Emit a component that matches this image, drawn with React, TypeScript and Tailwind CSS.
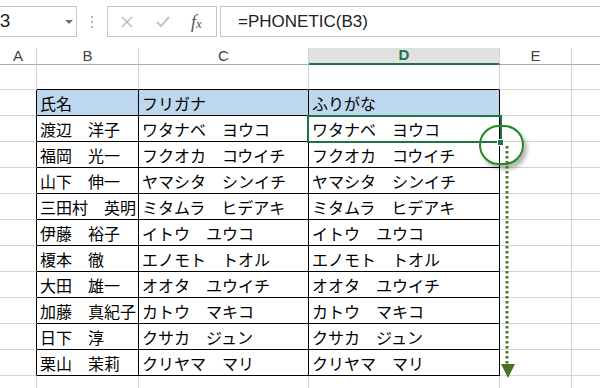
import React from 'react';

const cols = [37, 102, 170, 191, 72, 60];
const letters = ['A', 'B', 'C', 'D', 'E', ''];

const header = ['氏名', 'フリガナ', 'ふりがな'];
const people: [string, string][] = [
  ['渡辺　洋子', 'ワタナベ　ヨウコ'],
  ['福岡　光一', 'フクオカ　コウイチ'],
  ['山下　伸一', 'ヤマシタ　シンイチ'],
  ['三田村　英明', 'ミタムラ　ヒデアキ'],
  ['伊藤　裕子', 'イトウ　ユウコ'],
  ['榎本　徹', 'エノモト　トオル'],
  ['大田　雄一', 'オオタ　ユウイチ'],
  ['加藤　真紀子', 'カトウ　マキコ'],
  ['日下　淳', 'クサカ　ジュン'],
  ['栗山　茉莉', 'クリヤマ　マリ'],
];

type Kind = 'above' | 'table' | 'plain';

const Cell: React.FC<{ col: number; kind: Kind; blue?: boolean; text?: string }> = ({ col, kind, blue, text }) => {
  const inTable = col >= 1 && col <= 3;
  let rightCls = 'border-r-[#d4d4d4]';
  let bottomCls = 'border-b-[#d4d4d4]';
  if (kind === 'table' && col <= 3) rightCls = 'border-r-black';
  if (kind === 'table' && inTable) bottomCls = 'border-b-black';
  if (kind === 'above' && inTable) bottomCls = 'border-b-black';
  return (
    <div
      style={{ width: cols[col] }}
      className={`shrink-0 h-full border-r border-b ${rightCls} ${bottomCls} ${blue && inTable ? 'bg-[#bdd7ee]' : ''} flex items-center pl-[3px] whitespace-nowrap overflow-hidden text-[16px] text-black`}
    >
      {text}
    </div>
  );
};

const Row: React.FC<{ h: string; kind: Kind; blue?: boolean; texts?: string[] }> = ({ h, kind, blue, texts = [] }) => (
  <div className={`flex ${h}`}>
    {cols.map((_, i) => (
      <Cell key={i} col={i} kind={kind} blue={blue} text={i >= 1 && i <= 3 ? texts[i - 1] : undefined} />
    ))}
  </div>
);

export default function App() {
  return (
    <div
      className="w-[600px] h-[388px] bg-white overflow-hidden relative"
      style={{ fontFamily: '"Liberation Sans", "Noto Sans CJK JP", sans-serif' }}
    >
      {/* Formula bar */}
      <div className="flex items-stretch h-[31px] mt-[6px]">
        <div className="w-[78px] ml-[-1px] border border-[#c6c6c6] flex items-center overflow-hidden relative">
          <span className="ml-[-13px] text-[19px] text-[#222]">B3</span>
          <span className="absolute left-[65px] top-[13px] w-0 h-0 border-l-[4px] border-r-[4px] border-t-[4px] border-l-transparent border-r-transparent border-t-[#707070]" />
        </div>
        <div className="w-[30px] flex flex-col items-center justify-center gap-[3px]">
          <span className="w-[2px] h-[2px] bg-[#b4b4b4]" />
          <span className="w-[2px] h-[2px] bg-[#b4b4b4]" />
          <span className="w-[2px] h-[2px] bg-[#b4b4b4]" />
        </div>
        <div className="w-[110px] border border-[#c6c6c6] flex items-center">
          <svg width="12" height="12" viewBox="0 0 12 12" className="ml-[13px]">
            <path d="M1 1 L11 11 M11 1 L1 11" stroke="#b8b8b8" strokeWidth="1.4" fill="none" />
          </svg>
          <svg width="14" height="11" viewBox="0 0 14 11" className="ml-[23px]">
            <path d="M1 6 L5 10 L13 1" stroke="#c4c4c4" strokeWidth="2" fill="none" />
          </svg>
          <span
            className="ml-[21px] text-[18px] italic text-[#555] leading-none"
            style={{ fontFamily: '"Liberation Serif", serif' }}
          >
            f<span className="text-[13px]">x</span>
          </span>
        </div>
        <div className="ml-[3px] flex-1 border border-[#c6c6c6] border-r-0 flex items-center">
          <span className="ml-[17px] text-[17px] text-[#222]">=PHONETIC(B3)</span>
        </div>
      </div>

      {/* Grid */}
      <div className="mt-[11px]">
        <div className="flex h-[17px]">
          {cols.map((w, i) => (
            <div
              key={i}
              style={{ width: w }}
              className={`shrink-0 h-full border-r border-r-[#d4d4d4] flex items-center justify-center text-[15px] ${
                i === 3
                  ? 'bg-[#e1e1e1] border-b-2 border-b-[#217346] text-[#217346] font-bold'
                  : 'border-b border-b-[#ababab] text-[#444]'
              }`}
            >
              {letters[i]}
            </div>
          ))}
        </div>
        <div style={{ fontFamily: '"Noto Sans CJK JP", sans-serif' }}>
          <Row h="h-[25px]" kind="above" />
          <Row h="h-[26px]" kind="table" blue texts={header} />
          {people.map(([n, k], i) => (
            <Row key={i} h="h-[26px]" kind="table" texts={[n, k, k]} />
          ))}
          <Row h="h-[26px]" kind="plain" />
        </div>
      </div>

      {/* Selection on D3 */}
      <div className="absolute left-[307px] top-[115px] w-[195px] h-[28px] border-2 border-[#217346] pointer-events-none" />
      <div className="absolute left-[498px] top-[140px] w-[5px] h-[5px] bg-[#217346] outline outline-1 outline-white" />

      {/* Callout circle */}
      <div className="absolute left-[479px] top-[125px] w-[45px] h-[40px] rounded-full border-2 border-[#1f8a1f] shadow-[3px_4px_4px_rgba(0,0,0,0.3)]" />

      {/* Dotted arrow */}
      <svg className="absolute left-0 top-0 pointer-events-none" width="600" height="388">
        <line x1="507" y1="146" x2="507" y2="364" stroke="#4c7a24" strokeWidth="3" strokeDasharray="2.5 2.5" />
        <polygon points="501,364 515,364 508,378" fill="#4a7021" />
      </svg>
    </div>
  );
}
